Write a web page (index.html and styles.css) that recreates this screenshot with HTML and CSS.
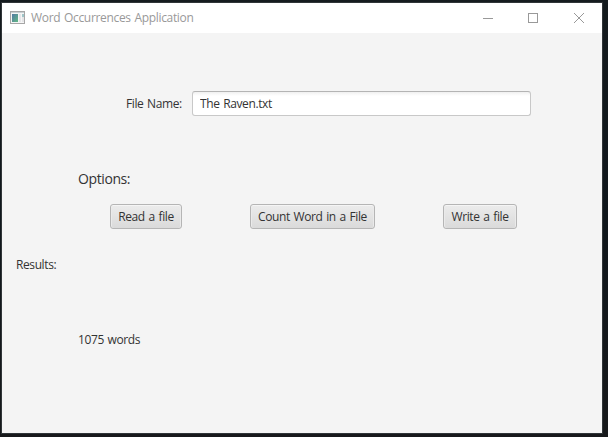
FILE: index.html
```
<!DOCTYPE html>
<html lang="en">
<head>
<meta charset="utf-8">
<title>Word Occurrences Application</title>
<link rel="stylesheet" href="styles.css">
</head>
<body>
<main class="window">
  <header class="titlebar">
    <svg class="app-icon" width="16" height="14" viewBox="0 0 16 14">
      <defs><linearGradient id="pane" x1="0" y1="0" x2="1" y2="1"><stop offset="0" stop-color="#5279a3"/><stop offset="1" stop-color="#62b885"/></linearGradient></defs>
      <rect x=".5" y=".5" width="14" height="12" fill="#f5f5f5" stroke="#a6a6a6"/>
      <path d="M1 1.5h13" stroke="#c8d0d3"/>
      <rect x="2" y="3" width="6" height="8" fill="url(#pane)"/>
      <rect x="9" y="3" width="2" height="8" fill="#e5e5e8"/>
      <rect x="12" y="3" width="2" height="3" fill="#9fc5c8"/>
      <rect x="12" y="6" width="2" height="5" fill="#e4e4e6"/>
    </svg>
    <span class="title">Word Occurrences Application</span>
    <svg class="controls" width="102" height="12" viewBox="0 0 102 12" fill="none" stroke="#999">
      <path d="M0 6.5h10"/>
      <rect x="45.5" y="1.5" width="9" height="9"/>
      <path d="M91 1l10 10M101 1L91 11"/>
    </svg>
  </header>
  <section class="content">
    <div class="file-row">
      <label class="file-label" for="file">File Name:</label>
      <input class="file-input" id="file" type="text" value="The Raven.txt">
    </div>
    <h2 class="options">Options:</h2>
    <div class="buttons">
      <button class="button read">Read a file</button>
      <button class="button count">Count Word in a File</button>
      <button class="button write">Write a file</button>
    </div>
    <div class="results">Results:</div>
    <output class="answer">1075 words</output>
  </section>
</main>
</body>
</html>
```
FILE: styles.css
```
* { box-sizing: border-box; }
body {
  margin: 0;
  height: 437px;
  padding: 2px 0 0 1px;
  overflow: hidden;
  background: linear-gradient(#151b1e, #10171c 50%, #17191b);
  font: 12px/16px "Open Sans", "Noto Sans", sans-serif;
  letter-spacing: -0.4px;
  word-spacing: 1px;
  color: #333;
}
.window {
  width: 602px;
  height: 432px;
  border: 1px solid #303538;
  background: #f4f4f4;
}
.titlebar {
  display: flex;
  align-items: center;
  height: 30px;
  padding-left: 8px;
  background: #fff;
}
.app-icon { margin-right: 5px; }
.title {
  color: #999;
  letter-spacing: -0.33px;
  white-space: nowrap;
}
.controls {
  margin: 0 17px 0 auto;
}
.content {
  display: flex;
  flex-direction: column;
  align-items: flex-start;
  padding-top: 58px;
}
.file-row {
  display: flex;
  align-items: center;
  padding-left: 124px;
}
.file-label {
  width: 66px;
  white-space: nowrap;
}
.file-input {
  width: 339px;
  height: 25px;
  padding: 0 7px;
  border: 1px solid #c8c8c8;
  border-top-color: #b4b4b4;
  border-radius: 3px;
  outline: 0;
  background: linear-gradient(#f0f0f0, #fff 4px);
  color: #333;
  font: inherit;
  letter-spacing: inherit;
  word-spacing: inherit;
}
.options {
  margin: 53px 0 0 76px;
  font-size: 14px;
  font-weight: 400;
  line-height: 20px;
}
.buttons {
  display: flex;
  margin: 15px 0 0 108px;
}
.button {
  height: 25px;
  padding: 0;
  border: 1px solid #b5b5b5;
  border-radius: 3px;
  background: linear-gradient(#ececec, #dadada);
  box-shadow: inset 0 1px #f5f5f5, inset 1px 0 #eaeaea, inset -1px 0 #eaeaea;
  color: #333;
  font: inherit;
  letter-spacing: inherit;
  word-spacing: inherit;
  white-space: nowrap;
}
.read { width: 72px; }
.count { width: 125px; margin-left: 68px; }
.write { width: 74px; margin-left: 68px; }
.results {
  margin: 28px 0 0 14px;
}
.answer {
  margin: 59px 0 0 76px;
}
```
